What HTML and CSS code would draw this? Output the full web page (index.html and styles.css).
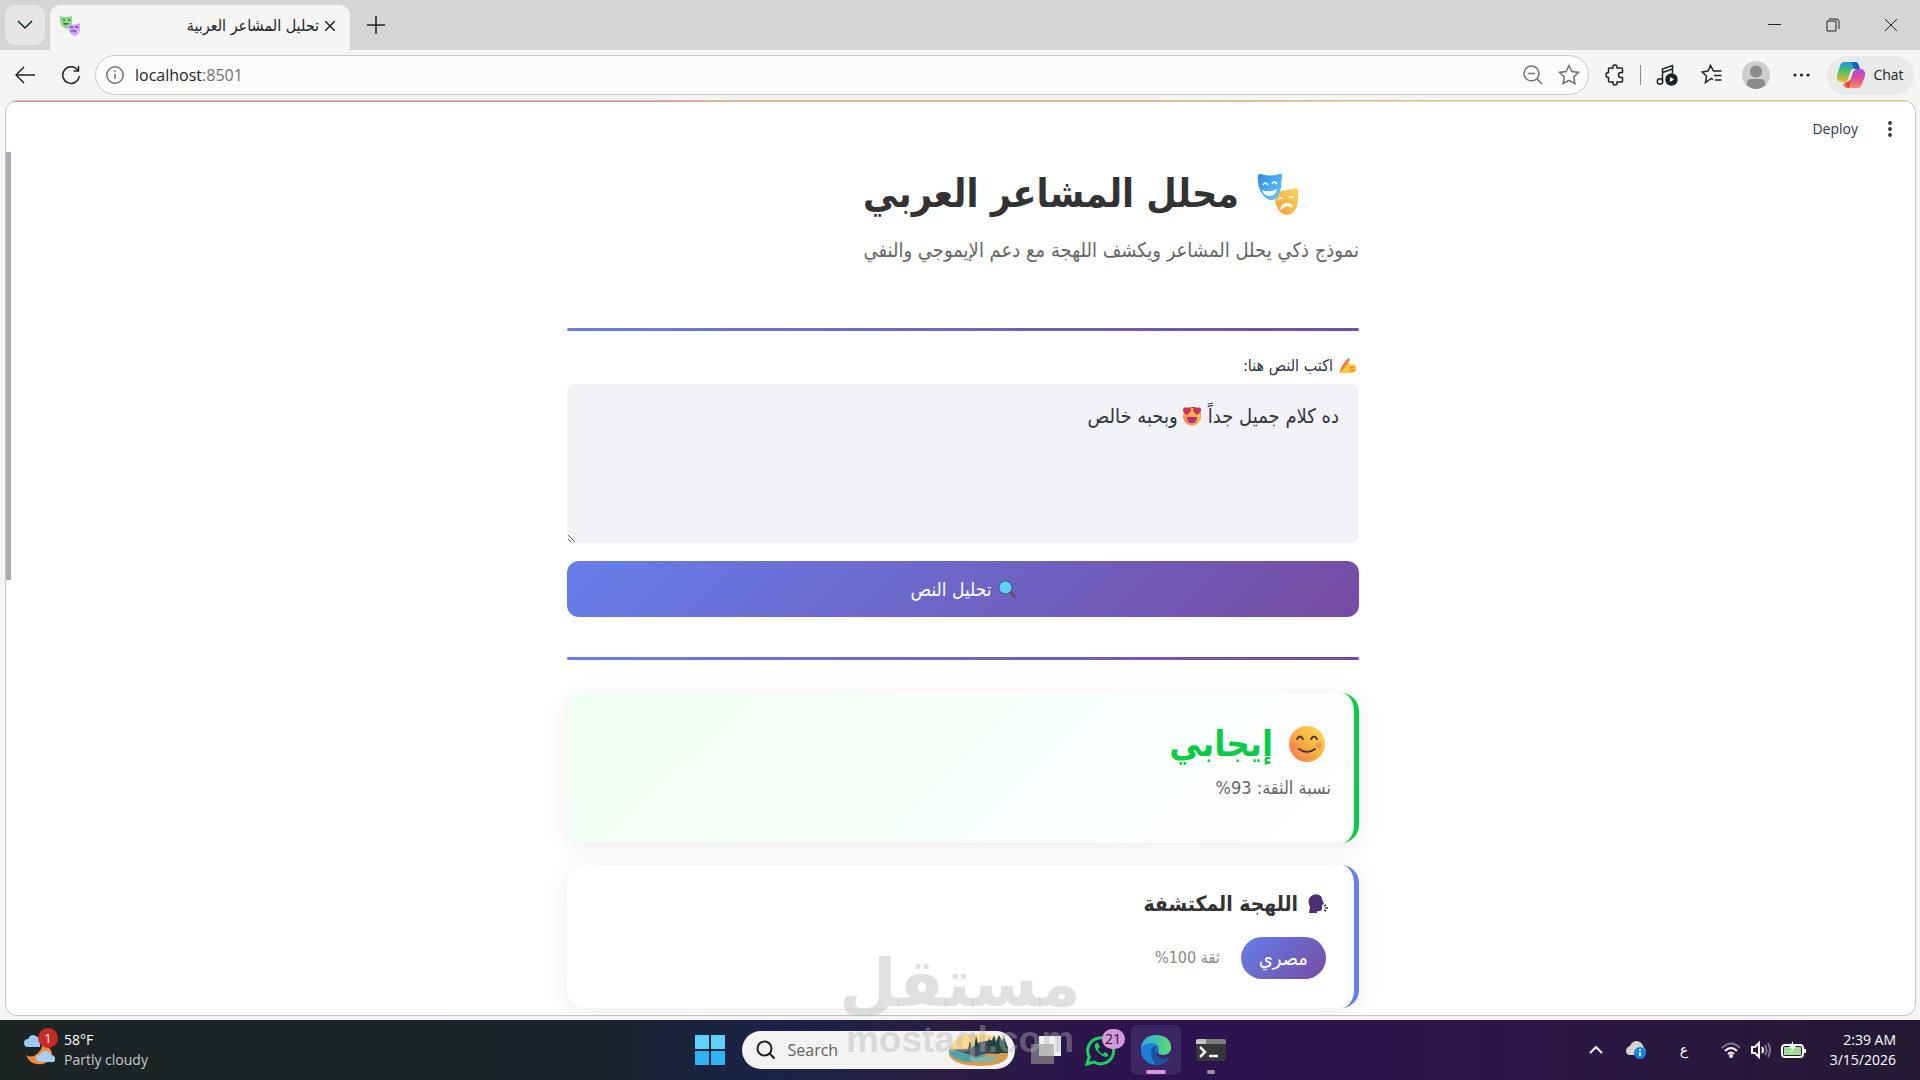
FILE: index.html
```html
<!DOCTYPE html>
<html lang="en">
<head>
<meta charset="utf-8">
<title>تحليل المشاعر العربية</title>
<link rel="stylesheet" href="styles.css">
</head>
<body>

<!-- shared drawings -->
<svg class="defs" width="0" height="0" aria-hidden="true">
  <defs>
    <linearGradient id="blue" x1="0" y1="0" x2="1" y2="1"><stop offset="0" stop-color="#2f86ea"/><stop offset="1" stop-color="#62d0fb"/></linearGradient>
    <linearGradient id="gold" x1="1" y1="0" x2="0" y2="1"><stop offset="0" stop-color="#fbd85a"/><stop offset="1" stop-color="#f79a3b"/></linearGradient>
    <linearGradient id="face" x1="1" y1="0" x2="0" y2="1"><stop offset="0" stop-color="#ffdc55"/><stop offset=".5" stop-color="#fcb03f"/><stop offset="1" stop-color="#f2705a"/></linearGradient>
    <linearGradient id="edge" x1="0" y1="0" x2="1" y2="0"><stop offset="0" stop-color="#2aa9e8"/><stop offset="1" stop-color="#5fdc6c"/></linearGradient>
    <linearGradient id="copilotA" x1="0" y1="0" x2="0" y2="1"><stop offset="0" stop-color="#1c8fe0"/><stop offset=".5" stop-color="#55c45a"/><stop offset="1" stop-color="#fbb62c"/></linearGradient>
    <linearGradient id="copilotB" x1="0" y1="0" x2="0" y2="1"><stop offset="0" stop-color="#b04be0"/><stop offset=".5" stop-color="#e04d9a"/><stop offset="1" stop-color="#fb8a5c"/></linearGradient>
  </defs>
</svg>

<header class="browser">
  <div class="tabs">
    <button class="tab-menu" aria-label="Tab actions"><svg width="16" height="10" viewBox="0 0 16 10"><path d="M1 1l7 7 7-7"/></svg></button>
    <div class="tab">
      <svg class="solid" width="20" height="20" viewBox="0 0 20 20">
        <path d="M0 0q6 2 12 0v7q0 5-5 6Q0 11 0 4z" fill="#8fd88b"/><path d="M3 4h2m3 0h2" stroke="#3c6f3d"/><path d="M3 7q3 4 6 0z" fill="#2f7a3a"/>
        <path d="M8 8q6 2 12-1v6q-1 6-6 7-6-3-6-12z" fill="#cfa6f5"/><path d="M10 11h3m2 0h3M11 16q3-3 5 0" stroke="#7d48b5" fill="none"/>
      </svg>
      <span class="tab-title" dir="rtl">تحليل المشاعر العربية</span>
      <button aria-label="Close tab"><svg width="10" height="10" viewBox="0 0 10 10"><path d="M0 0l10 10M10 0L0 10"/></svg></button>
    </div>
    <button class="new-tab" aria-label="New tab"><svg width="20" height="20" viewBox="0 0 20 20"><path d="M10 1v18M1 10h18"/></svg></button>
    <div class="window-buttons">
      <button aria-label="Minimize"><svg width="14" height="14" viewBox="0 0 14 14"><path d="M0 6.5h13"/></svg></button>
      <button aria-label="Restore"><svg width="14" height="14" viewBox="0 0 14 14"><path d="M1 3h9v10H1zM3 1h7q3 0 3 3v7"/></svg></button>
      <button aria-label="Close"><svg width="14" height="14" viewBox="0 0 14 14"><path d="M1 1l12 12M13 1L1 13"/></svg></button>
    </div>
  </div>
  <div class="toolbar">
    <button class="back" aria-label="Back"><svg width="21" height="18" viewBox="0 0 21 18"><path d="M9 1L1 9l8 8M1 9h19"/></svg></button>
    <button class="reload" aria-label="Refresh"><svg width="20" height="20" viewBox="0 0 20 20"><path d="M17 5.500A8.300 8.300 0 1 0 18.300 11M17.500 1v5h-5"/></svg></button>
    <div class="address">
      <svg class="grey" width="18" height="18" viewBox="0 0 18 18"><circle cx="9" cy="9" r="8.200"/><path d="M9 8v5M9 4.500v1.800"/></svg>
      <div class="url"><a href="http://localhost:8501">localhost<span>:8501</span></a></div>
      <button aria-label="Zoom"><svg class="grey" width="20" height="20" viewBox="0 0 20 20"><circle cx="8.500" cy="8.500" r="7.500"/><path d="M5 8.500h7M14 14l5 5"/></svg></button>
      <button aria-label="Add to favorites"><svg class="grey" width="22" height="22" viewBox="0 0 22 22"><path d="M11 1.500l2.900 6 6.600.9-4.800 4.600 1.200 6.500-5.900-3.100-5.900 3.100 1.200-6.500L1.500 8.400l6.600-.9z"/></svg></button>
    </div>
    <div class="tools">
      <button aria-label="Extensions"><svg width="20" height="22" viewBox="0 0 20 22"><path d="M4.500 4H8q-.5-3 2-3t2 3h4.500q1 0 1 1v3.500H16q-2.500 0-2.500 2.500t2.500 2.500h1.500V17q0 1-1 1H12q.5 3-2 3t-2-3H4.500q-1 0-1-1v-3.500Q1 13.500 1 11t2.500-2.500V5q0-1 1-1z"/></svg></button>
      <span class="divider"></span>
      <button aria-label="Media"><svg width="22" height="22" viewBox="0 0 22 22"><path d="M6.500 17V5l10-3.500v8M6.500 8.500l10-3.500"/><circle cx="4" cy="17.500" r="2.700"/><circle cx="15.500" cy="15.500" r="5.500" fill="#1d2427"/><path d="M14 13v5l4-2.500z" fill="#fff" stroke="none"/></svg></button>
      <button aria-label="Favorites"><svg width="22" height="22" viewBox="0 0 22 22"><path d="M12 15.500l-2-1-5.500 4 1-6.500L1 8l6-1L9.500 1.500 12.500 7h8M13 11.500h7.500M14 16h6.500"/></svg></button>
      <button class="profile" aria-label="Profile"><svg class="solid" width="28" height="28" viewBox="0 0 28 28"><circle cx="14" cy="14" r="14" fill="#cdcdcd"/><circle cx="14" cy="10.500" r="6" fill="#8b8b8b"/><path d="M4.500 24Q5 18 9 18h10q4 0 4.500 6-9.500 8-19 0z" fill="#8b8b8b"/></svg></button>
      <button aria-label="Settings and more"><svg class="solid" width="17" height="4" viewBox="0 0 17 4"><g fill="#1d2427"><circle cx="2" cy="2" r="1.600"/><circle cx="8.500" cy="2" r="1.600"/><circle cx="15" cy="2" r="1.600"/></g></svg></button>
    </div>
    <button class="chat">
      <svg class="solid" width="28" height="26" viewBox="0 0 28 26"><path d="M8 0h10q3 0 4 4l1 3h-6q-3 0-4 4l-2 6q-1 3-4 3H4q-5-1-4-7L3 4q1-4 5-4z" fill="url(#copilotA)"/><path d="M15 0h3q3 0 4 4l1 3h-5q-2-1-3-7z" fill="#1763c4"/><path d="M20 26H10q-3 0-4-4l3-2q4 0 5-4l2-6q1-3 4-3h4q5 1 4 7l-3 8q-1 4-5 4z" fill="url(#copilotB)"/><path d="M9 20l5-2-2 8q-4 0-3-6z" fill="#e04a2e"/><path d="M17 7h2q-3 1-4 5l-2 5q-1 2-3 3 1-1 2-4l2-6q1-3 3-3z" fill="#f5f5f5"/></svg>
      Chat
    </button>
  </div>
</header>

<main class="viewport">
  <div class="app-scroll"></div>
  <div class="app-bar">
    <button>Deploy</button>
    <button class="kebab" aria-label="Menu"><svg class="solid" width="4" height="16" viewBox="0 0 4 16"><g fill="#31333f"><circle cx="2" cy="2" r="1.900"/><circle cx="2" cy="8" r="1.900"/><circle cx="2" cy="14" r="1.900"/></g></svg></button>
  </div>

  <div class="content" dir="rtl">
    <h1>
      <svg class="solid" width="42" height="42" viewBox="0 0 42 42">
        <path d="M1 3Q1 0 4 1q9 3 18 0 3-1 3 2l-1 11q-1 11-8 13-5 1-10-5Q0 15 1 3z" fill="url(#blue)"/>
        <path d="M6 12q2-4 5 0M15 11q2-4 5 0" stroke="#fff" stroke-width="1.500" fill="none"/><path d="M5 17q8 3 15-1-1 7-7 7-6 0-8-6z" fill="#fff"/>
        <path d="M18 26q4-4 6-8 9-1 14-3 3 0 3 3v11q-2 11-10 13-6 0-10-6-3-5-3-10z" fill="url(#gold)"/>
        <path d="M21 27q2-4 5-1M32 25q2-3 5 0" stroke="#fff" stroke-width="1.500" fill="none"/><path d="M23 37q1-7 7-7 5 0 6 5l-6-2z" fill="#fff"/>
      </svg>
      <span>محلل المشاعر العربي</span>
    </h1>
    <p class="subtitle">نموذج ذكي يحلل المشاعر ويكشف اللهجة مع دعم الإيموجي والنفي</p>

    <hr>

    <label class="field-label" for="text">
      <svg class="solid" width="18" height="16" viewBox="0 0 18 16"><path d="M0 15l2-6q3-3 6-4 3 0 3 2l4-1q2 0 1 2 2 0 1 2 1 1 0 2 0 2-3 3z" fill="#ffc83d"/><path d="M1 15l2-7 5-7 2-1 1 2-5 7z" fill="#f57943"/><path d="M10 10l5-1m-4 4l5-1" stroke="#f08b2c"/></svg>
      <span>اكتب النص هنا:</span>
    </label>
    <div class="field">
      <textarea id="text" dir="rtl">ده كلام جميل جداً 😍 وبحبه خالص</textarea>
      <svg class="solid heart-eyes" width="20" height="20" viewBox="0 0 20 20"><circle cx="10" cy="10.500" r="9" fill="url(#face)"/><path d="M5 9Q0 6 1 3q2-3 4-1 3-2 4 1 0 3-4 6zM15 9q-4-3-4-6 1-3 4-1 2-2 4 1 1 3-4 6z" fill="#d32d5f"/><path d="M5 11h10q0 6-5 6t-5-6z" fill="#b52a83"/></svg>
    </div>

    <button class="analyze">
      <svg class="solid" width="18" height="18" viewBox="0 0 18 18"><path d="M12 12l5 5" stroke="#6b4a72" stroke-width="3" stroke-linecap="round"/><circle cx="7.500" cy="7.500" r="7" fill="#435a8f"/><circle cx="7.500" cy="7.500" r="6" fill="#5fd3f7"/></svg>
      <span>تحليل النص</span>
    </button>

    <hr>

    <section class="card positive">
      <h2>
        <svg class="solid" width="36" height="36" viewBox="0 0 36 36"><circle cx="18" cy="18" r="18" fill="url(#face)"/><g fill="none" stroke="#4a3546" stroke-width="2" stroke-linecap="round"><path d="M8 13q3-5 6 0M22 13q3-5 6 0M10 23q8 6 16 0"/></g><circle cx="6" cy="20" r="3" fill="#f4745c" opacity=".4"/><circle cx="30" cy="19" r="3" fill="#f4745c" opacity=".5"/></svg>
        <span>إيجابي</span>
      </h2>
      <p>نسبة الثقة: 93%</p>
    </section>

    <section class="card dialect">
      <h3>
        <svg class="solid" width="20" height="20" viewBox="0 0 20 20"><path d="M1 19l1-6Q-1 7 2 3q4-4 9-2 3 1 3 4l2 5-2 1v4q-1 3-5 2v2z" fill="#4c2f73"/><path d="M16 12l2-1m-1 3h3m-4 2l2 1" stroke="#4c2f73" stroke-width="1.500"/></svg>
        <span>اللهجة المكتشفة</span>
      </h3>
      <div class="dialect-row">
        <span class="badge">مصري</span>
        <span class="confidence">ثقة 100%</span>
      </div>
    </section>
  </div>
</main>

<footer class="taskbar">
  <div class="weather">
    <div class="weather-icon">
      <svg class="solid" width="32" height="30" viewBox="0 0 32 30"><path d="M2 20q6 4 12-2 5-5 4-9 8 2 10 9 0 8-9 11Q6 31 2 20z" fill="#f08a3c"/><path d="M4 12q-4 0-4-4t4-4q3-6 8-3 3 1 4 4v7z" fill="#9cc8f2"/><path d="M16 27q-4 0-4-4t4-3q2-5 7-4 3 1 4 4 4 0 4 4t-4 3z" fill="#a9cdf5"/></svg>
      <span class="count">1</span>
    </div>
    <div><div class="temp">58°F</div><div>Partly cloudy</div></div>
  </div>

  <div class="apps">
    <button class="start" aria-label="Start"><svg class="solid" width="30" height="30" viewBox="0 0 30 30"><path d="M0 0h14v14H0zM16 0h14v14H16z" fill="#5fd2fb"/><path d="M0 16h14v14H0zM16 16h14v14H16z" fill="#2cb4f7"/></svg></button>
    <label class="search">
      <svg width="20" height="20" viewBox="0 0 20 20"><circle cx="8.500" cy="8.500" r="7"/><path d="M13.500 13.500l5 5"/></svg>
      <input type="text" placeholder="Search">
      <svg class="solid" width="62" height="34" viewBox="0 0 62 34"><path d="M2 16Q6 1 28 1q24 0 32 14l-4 8H5z" fill="#ffda8a"/><path d="M2 16h58v7q-3 10-30 10Q5 32 1 22z" fill="#d99a52"/><path d="M0 17h30l8 6-16 6Q4 28 0 17z" fill="#4fa3a8"/><path d="M20 27q14-4 30-3l-4 4q-12 3-26-1z" fill="#7cb7b0"/><path d="M8 17l14-1 10-7 12-2 16 7v4l-10 3q-16-2-22 3z" fill="#3d4c5c"/><path d="M39 13l2-8 2 5 3-8 2 7 3-7 3 6 2-4 4 11v5H44zM26 15l2-12 3 11zM20 16l2-8 2 8z" fill="#21453e"/></svg>
    </label>
    <button class="app" aria-label="Task view"><svg class="solid" width="30" height="30" viewBox="0 0 30 30"><path d="M8 1h22v20H8z" fill="#f2f2f2"/><path d="M0 9h23v20H0z" fill="#78787c" opacity=".85"/><path d="M8 9h15v12H8z" fill="#bababa"/></svg></button>
    <button class="app" aria-label="WhatsApp"><svg width="32" height="32" viewBox="0 0 32 32"><path d="M2 30l2.200-7A13 13 0 1 1 9 28z" stroke="#1fd15c" stroke-width="3"/><path d="M11 9q-3 3 1 8t9 6q3-1 2-3l-3-2-2 2q-4-1-5-5l2-2-2-4z" fill="#1fd15c" stroke="none"/></svg><span class="unread">21</span></button>
    <button class="app open" aria-label="Microsoft Edge"><svg class="solid" width="32" height="32" viewBox="0 0 32 32"><circle cx="16" cy="16" r="15" fill="#1b7fd4"/><path d="M1 15Q2 1 17 1q14 1 14 13 0 7-8 7-6 0-4-5 0-7-8-7-7 0-10 6z" fill="url(#edge)"/><path d="M11 17q1-5 6-5-3 3-1 8 3 5 14 2-4 9-13 9-6-4-6-14z" fill="#1b52a0"/><path d="M17 12q-2 9 6 9 6 0 8-5v6q-5 4-11 2-6-3-3-12z" fill="#3b2663"/></svg></button>
    <button class="app running" aria-label="Terminal"><svg class="solid" width="30" height="22" viewBox="0 0 30 22"><rect width="30" height="22" rx="2" fill="#343638"/><path d="M2 0h26q2 0 2 2v3H0V2q0-2 2-2z" fill="#7d7d80"/><path d="M2 0h8v5H0V2q0-2 2-2z" fill="#c4c4c6"/><path d="M4 8l5 5-5 5M13 17h9" stroke="#f1f1f1" stroke-width="2.500" fill="none"/></svg></button>
  </div>

  <div class="tray">
    <button aria-label="Hidden icons"><svg width="14" height="8" viewBox="0 0 14 8"><path d="M1 7l6-6 6 6"/></svg></button>
    <svg class="solid" width="20" height="18" viewBox="0 0 20 18"><path d="M4 14q-4 0-4-4t4-5q2-5 7-5 5 1 6 5l3 5-4 4z" fill="#d2d2d2"/><circle cx="14" cy="12" r="6" fill="#1584da"/><path d="M14 11v4m0-7v2" stroke="#fff" stroke-width="1.500"/></svg>
    <span class="lang">ع</span>
    <div class="status">
      <svg width="20" height="16" viewBox="0 0 20 16"><path d="M1 6q9-9 18 0" opacity=".4"/><path d="M4 9q6-6 12 0M7 12q3-3 6 0"/><circle cx="10" cy="14" r="1"/></svg>
      <svg width="20" height="18" viewBox="0 0 20 18"><path d="M1 6h3l4-4v14l-4-4H1zM11 6q2 3 0 6"/><path d="M14 4q3 5 0 10M17 2q4 7 0 14" opacity=".4"/></svg>
      <svg width="26" height="18" viewBox="0 0 26 18"><rect x="1" y="4" width="21" height="12" rx="3"/><rect x="3" y="6" width="17" height="8" fill="#a4dd91" stroke="none"/><path d="M24 8v4"/><path d="M12 0l-4 7h3l-1 5 5-7h-3z" fill="#fff" stroke="none"/></svg>
    </div>
    <div class="clock"><div>2:39 AM</div><div>3/15/2026</div></div>
  </div>
</footer>

<div class="watermark" aria-hidden="true">
  <div class="mark-ar" dir="rtl">مستقل</div>
  <div class="mark-en">mostaql.com</div>
</div>

</body>
</html>
```
FILE: styles.css
```css
* {
  box-sizing: border-box;
}

body {
  margin: 0;
  height: 100vh;
  display: flex;
  flex-direction: column;
  overflow: hidden;
  background: #f5f5f5;
  color: #1d2427;
  font: 16px/20px "Open Sans", "DejaVu Sans", sans-serif;
}

button {
  border: 0;
  padding: 0;
  background: none;
  color: inherit;
  font: inherit;
  display: flex;
  align-items: center;
  justify-content: center;
}

svg {
  display: block;
  flex: none;
  fill: none;
  stroke: #1d2427;
  stroke-width: 1.5;
}

svg.solid {
  stroke: none;
}

svg.grey {
  stroke: #707070;
}

.defs {
  position: absolute;
}

h1, h2, h3, p {
  margin: 0;
}

/* browser chrome */

.tabs {
  display: flex;
  height: 50px;
  padding: 5px 0 0 5px;
  background: #d5d5d5;
}

.tab-menu {
  width: 40px;
  height: 40px;
  border-radius: 10px;
  background: #e6e6e6;
}

.tab {
  display: flex;
  align-items: center;
  gap: 6px;
  width: 300px;
  margin-left: 5px;
  padding: 0 15px 4px 10px;
  border-radius: 10px 10px 0 0;
  background: #f5f5f5;
}

.tab-title {
  flex: 1;
  font: 16px/20px "DejaVu Sans Condensed", "DejaVu Sans", sans-serif;
}

.new-tab {
  width: 40px;
  height: 40px;
  margin-left: 6px;
}

.window-buttons {
  display: flex;
  margin-left: auto;
}

.window-buttons button {
  width: 58px;
  height: 40px;
}

.window-buttons svg {
  stroke-width: 1;
}

.toolbar {
  display: flex;
  align-items: center;
  height: 50px;
  padding: 0 6px 0 15px;
}

.reload {
  margin: 0 14px 0 25px;
}

.address {
  flex: 1;
  display: flex;
  align-items: center;
  gap: 15px;
  height: 40px;
  padding: 0 8px 0 10px;
  border: 1px solid #c9c9c9;
  border-radius: 20px;
  background: #fcfcfc;
}

.url {
  flex: 1;
  margin-left: -4px;
}

.url a {
  color: #1d2427;
  text-decoration: none;
}

.url span {
  color: #707070;
}

.tools {
  display: flex;
  align-items: center;
  gap: 23px;
  padding: 0 17px 0 16px;
}

.divider {
  width: 1px;
  height: 20px;
  margin: 0 -8px;
  background: #8a8a8a;
}

.profile {
  margin-left: -4px;
}

.chat {
  gap: 8px;
  width: 87px;
  height: 39px;
  border-radius: 20px;
  background: #e9e9e9;
  font-size: 14px;
}

/* page */

.viewport {
  flex: 1;
  position: relative;
  min-height: 0;
  margin: 0 4px 4px 5px;
  border: 1px solid #c4c4c4;
  border-radius: 12px;
  background: #fff;
  overflow: hidden;
}

.viewport::before {
  content: "";
  display: block;
  height: 1px;
  background: linear-gradient(90deg, #e5807a 33%, #edb27c 38%, #edb27c 60%, #f2dc94 75%);
}

.app-scroll {
  position: absolute;
  top: 51px;
  left: 0;
  width: 5px;
  height: 428px;
  background: #a9abb2;
}

.app-bar {
  display: flex;
  justify-content: flex-end;
  align-items: center;
  gap: 30px;
  height: 54px;
  padding-right: 23px;
  color: #31333f;
  font-size: 14px;
}

/* the left padding makes up for the scrollbar */
.content {
  width: 797px;
  max-width: 100%;
  margin: 0 auto;
  padding-left: 5px;
  color: #31333f;
  font-family: "DejaVu Sans Condensed", "DejaVu Sans", sans-serif;
}

h1 {
  display: flex;
  align-items: center;
  gap: 18px;
  height: 76px;
  padding-right: 60px;
  color: #333;
  font-size: 39px;
  line-height: 76px;
}

.subtitle {
  height: 36px;
  color: #666;
  font-size: 20px;
  line-height: 36px;
}

.content hr {
  height: 3px;
  margin: 60px 0 20px;
  border: 0;
  border-radius: 2px;
  background: linear-gradient(90deg, #667eea, #764ba2);
}

.field-label {
  display: flex;
  align-items: center;
  gap: 6px;
  height: 30px;
  margin-bottom: 3px;
  padding-right: 2px;
  font-size: 16px;
}

.field {
  position: relative;
  margin-bottom: 18px;
}

textarea {
  display: block;
  width: 100%;
  height: 159px;
  padding: 16px 20px;
  border: 0;
  border-radius: 8px;
  background: #f0f2f6;
  color: #31333f;
  font: 20px/32px "DejaVu Sans Condensed", "DejaVu Sans", sans-serif;
  resize: vertical;
}

.heart-eyes {
  position: absolute;
  top: 22px;
  right: 157px;
}

.analyze {
  gap: 6px;
  width: 100%;
  height: 56px;
  border-radius: 12px;
  background: linear-gradient(135deg, #667eea, #764ba2);
  color: #fff;
  font-size: 19px;
}

.analyze + hr {
  margin: 40px 0 33px;
}

.card {
  border-right: 5px solid #667eea;
  border-radius: 18px;
  background: #fff;
  box-shadow: 0 4px 24px rgba(0, 0, 0, .08);
}

.positive {
  height: 150px;
  margin-bottom: 22px;
  padding: 24px 23px 0;
  border-color: #0acb47;
  background: linear-gradient(135deg, #f0fff4, #fff);
}

.positive h2 {
  display: flex;
  align-items: center;
  gap: 16px;
  height: 54px;
  padding-right: 6px;
  color: #0acb47;
  font-size: 36px;
  line-height: 54px;
}

.positive p {
  color: #666;
  font-size: 18px;
  line-height: 34px;
}

.dialect {
  height: 143px;
  padding: 22px 26px 0;
}

.dialect h3 {
  display: flex;
  align-items: center;
  gap: 10px;
  height: 34px;
  color: #333;
  font-size: 21px;
}

.dialect-row {
  display: flex;
  align-items: center;
  gap: 21px;
  margin-top: 16px;
  padding-right: 2px;
}

.badge {
  padding: 0 18px;
  border-radius: 21px;
  background: linear-gradient(135deg, #667eea, #764ba2);
  color: #fff;
  font-size: 20px;
  line-height: 42px;
}

.confidence {
  color: #888;
  font-size: 16px;
}

/* taskbar */

.taskbar {
  flex: none;
  display: grid;
  grid-template-columns: 1fr auto 1fr;
  align-items: center;
  height: 60px;
  padding: 0 24px;
  background: linear-gradient(90deg, #1c2424, #1a2428 30%, #1a2348 40%, #2a1d42 49%, #2c1250 60%, #2d1746 80%, #231a33);
  color: #fff;
  font-size: 14px;
}

.weather {
  display: flex;
  align-items: center;
  gap: 8px;
  color: #c9c9cb;
}

.temp {
  color: #fff;
}

.weather-icon {
  position: relative;
}

.count {
  position: absolute;
  top: -7px;
  right: -2px;
  width: 20px;
  height: 20px;
  border-radius: 10px;
  background: #c42b24;
  color: #fff;
  font-size: 13px;
  text-align: center;
}

.apps {
  display: flex;
  align-items: center;
  padding-left: 10px;
}

.search {
  display: flex;
  align-items: center;
  gap: 12px;
  width: 273px;
  height: 38px;
  margin: 0 6px 0 17px;
  padding: 0 5px 0 14px;
  border-radius: 19px;
  background: #f3f3f4;
}

.search > svg:first-child {
  stroke-width: 2;
}

.search input {
  flex: 1;
  min-width: 0;
  border: 0;
  padding: 0;
  background: none;
  font: 16px/20px "Open Sans", sans-serif;
}

.search input::placeholder {
  color: #616161;
}

.app {
  position: relative;
  width: 50px;
  height: 50px;
  margin-right: 5px;
  border-radius: 6px;
}

.app:last-child {
  margin-right: 0;
}

.app.open {
  background: #3b2663;
}

.app.open::after, .app.running::after {
  content: "";
  position: absolute;
  bottom: 1px;
  left: 15px;
  width: 20px;
  height: 4px;
  border-radius: 2px;
  background: #d797dc;
}

.app.running::after {
  left: 21px;
  width: 8px;
  background: #9a98a4;
}

.unread {
  position: absolute;
  top: 4px;
  right: 1px;
  width: 23px;
  border-radius: 10px;
  background: #d797dc;
  color: #201a26;
}

.tray {
  display: flex;
  justify-content: flex-end;
  align-items: center;
}

.tray svg:not(.solid) {
  stroke: #fff;
  stroke-width: 2;
}

.tray > .solid {
  margin: 0 34px 0 23px;
}

.lang {
  font-family: "DejaVu Sans", sans-serif;
}

.status {
  display: flex;
  align-items: center;
  gap: 10px;
  width: 86px;
  margin: 0 0 0 33px;
}

.clock {
  width: 89px;
  text-align: right;
}

/* stamp over the page and the taskbar */

.watermark {
  position: absolute;
  bottom: 20px;
  left: 0;
  right: 0;
  color: rgba(180, 180, 184, .42);
  text-align: center;
  pointer-events: none;
}

.mark-ar {
  font: bold 66px/72px "DejaVu Sans", sans-serif;
}

.mark-en {
  font: bold 37px/40px "Liberation Sans", sans-serif;
}
```
